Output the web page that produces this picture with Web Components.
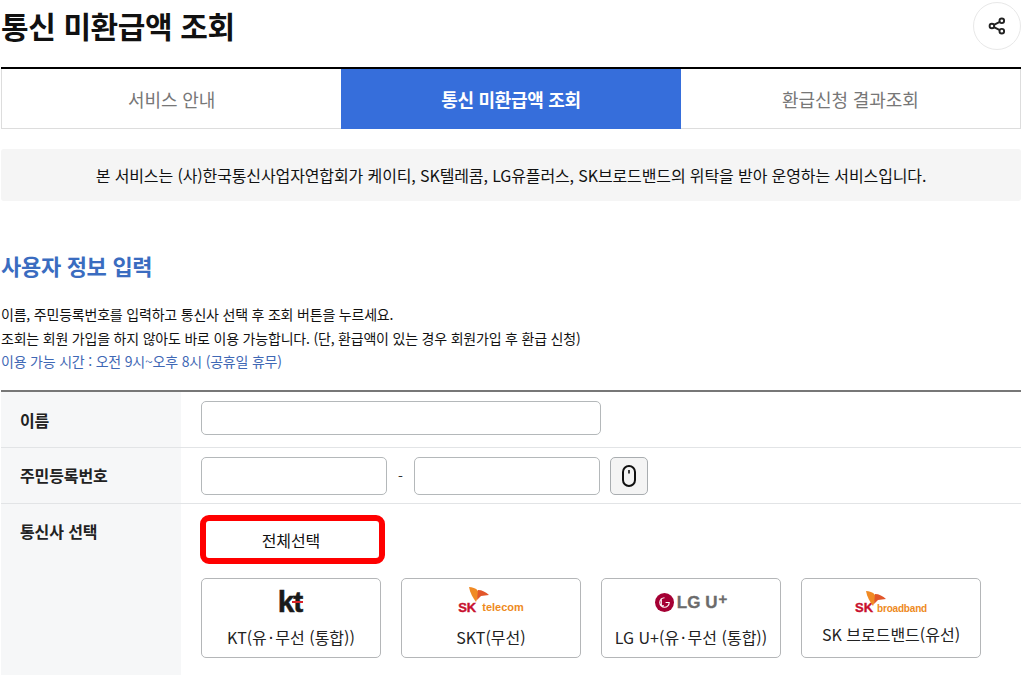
<!DOCTYPE html>
<html lang="ko">
<head>
<meta charset="utf-8">
<title>통신 미환급액 조회</title>
<style>
  html, body { margin: 0; background: #fff; }
  body {
    font-family: "Noto Sans CJK KR", "Noto Sans", sans-serif;
    color: #111;
    height: 675px;
    overflow: hidden;
  }
</style>
</head>
<body>
<refund-page></refund-page>

<script>
// Page header with title and share button
class PageHeader extends HTMLElement {
  constructor() {
    super();
    this.attachShadow({ mode: 'open' }).innerHTML = `
      <style>
        :host { display: flex; justify-content: space-between; align-items: flex-start; height: 67px; padding-left: 1px; }
        h1 { margin: 0; font-size: 30px; font-weight: 700; line-height: 50px; color: #111; letter-spacing: -0.4px; }
        button {
          width: 48px; height: 48px; margin: 2px 1px 0 0; padding: 0;
          border: 1px solid #e8e8e8; border-radius: 50%; background: #fff;
          display: flex; align-items: center; justify-content: center;
        }
      </style>
      <h1><slot></slot></h1>
      <button aria-label="공유">
        <svg width="18" height="18" viewBox="0 0 18 18" fill="none" stroke="#222" stroke-width="1.9">
          <circle cx="13.8" cy="3.8" r="2.3"/><circle cx="3.9" cy="9" r="2.3"/><circle cx="13.8" cy="14.2" r="2.3"/>
          <path d="M5.9 7.9l5.9-3M5.9 10.1l5.9 3"/>
        </svg>
      </button>`;
  }
}
customElements.define('page-header', PageHeader);

// Three tabs, the "active" attribute gives the blue one
class TabItem extends HTMLElement {
  constructor() {
    super();
    this.attachShadow({ mode: 'open' }).innerHTML = `
      <style>
        :host {
          display: flex; flex: 1; align-items: center; justify-content: center;
          font-size: 18px; color: #777; letter-spacing: -0.1px;
          border-bottom: 1px solid #ddd;
        }
        :host(:first-child) { border-left: 1px solid #ddd; }
        :host(:last-child) { border-right: 1px solid #ddd; }
        :host([active]) { background: #366edb; color: #fff; font-weight: 700; border-bottom-color: #366edb; letter-spacing: -0.3px; }
      </style>
      <slot></slot>`;
  }
}
customElements.define('tab-item', TabItem);

class TabBar extends HTMLElement {
  constructor() {
    super();
    this.attachShadow({ mode: 'open' }).innerHTML = `
      <style>
        :host { display: flex; height: 60px; margin: 0 1px; border-top: 2px solid #000; }
      </style>
      <slot></slot>`;
  }
}
customElements.define('tab-bar', TabBar);

class NoticeBox extends HTMLElement {
  constructor() {
    super();
    this.attachShadow({ mode: 'open' }).innerHTML = `
      <style>
        :host {
          display: flex; align-items: center; justify-content: center;
          height: 52px; margin: 20px 1px 0; background: #f5f5f5; border-radius: 3px;
          font-size: 16px; letter-spacing: -0.12px; color: #111;
        }
      </style>
      <slot></slot>`;
  }
}
customElements.define('notice-box', NoticeBox);

class InfoIntro extends HTMLElement {
  constructor() {
    super();
    this.attachShadow({ mode: 'open' }).innerHTML = `
      <style>
        :host { display: block; padding: 46px 1px 0; height: 189px; box-sizing: border-box; font-size: 14px; letter-spacing: -0.2px; }
        h2 { margin: 0 0 20px; font-size: 22px; line-height: 36px; font-weight: 700; color: #3a6cc0; letter-spacing: -0.3px; }
        p { margin: 0; line-height: 23.5px; color: #111; }
        .time { color: #3f68b5; }
      </style>
      <h2>사용자 정보 입력</h2>
      <p>이름, 주민등록번호를 입력하고 통신사 선택 후 조회 버튼을 누르세요.</p>
      <p>조회는 회원 가입을 하지 않아도 바로 이용 가능합니다. (단, 환급액이 있는 경우 회원가입 후 환급 신청)</p>
      <p class="time">이용 가능 시간 : 오전 9시~오후 8시 (공휴일 휴무)</p>`;
  }
}
customElements.define('info-intro', InfoIntro);

// One label + field row of the form table
class FormRow extends HTMLElement {
  constructor() {
    super();
    this.attachShadow({ mode: 'open' }).innerHTML = `
      <style>
        :host { display: grid; grid-template-columns: 180px 1fr; border-bottom: 1px solid #e2e4e6; }
        :host([last]) { border-bottom: 0; }
        .label {
          background: #f6f7f8; padding: 0 0 var(--label-pb, 0) 19px;
          display: flex; align-items: center;
          font-size: 16px; font-weight: 700; color: #222; letter-spacing: -0.1px;
        }
        :host([top]) .label { align-items: flex-start; padding-top: 15px; }
        .field { padding: var(--field-pad, 0 20px); display: flex; align-items: center; }
      </style>
      <div class="label"><slot name="label"></slot></div>
      <div class="field"><slot></slot></div>`;
  }
}
customElements.define('form-row', FormRow);

class CarrierCard extends HTMLElement {
  constructor() {
    super();
    this.attachShadow({ mode: 'open' }).innerHTML = `
      <style>
        :host {
          display: flex; flex-direction: column; align-items: center;
          width: 180px; height: 80px; box-sizing: border-box;
          border: 1px solid #b4b6b8; border-radius: 5px; background: #fff;
          font-size: 16px; color: #222;
        }
        .logo { height: var(--logo-h, 46px); display: flex; align-items: center; justify-content: center; }
      </style>
      <div class="logo"><slot name="logo"></slot></div>
      <slot></slot>`;
  }
}
customElements.define('carrier-card', CarrierCard);

// Top-level page, puts everything together
class RefundPage extends HTMLElement {
  constructor() {
    super();
    this.attachShadow({ mode: 'open' }).innerHTML = `
      <style>
        :host { display: block; width: 1022px; }
        .table { margin: 0 1px; border-top: 2px solid #777; }
        input {
          box-sizing: border-box; height: 34px; padding: 0 8px; margin: 0; background: #fff;
          border: 1px solid #b4b8ba; border-radius: 5px; font: inherit;
        }
        .name { width: 400px; }
        .ssn { display: flex; align-items: center; }
        .ssn input { width: 186px; height: 38px; }
        .dash { width: 27px; text-align: center; font-size: 14px; color: #333; }
        .kbd {
          width: 38px; height: 38px; margin-left: 10px; padding: 0;
          border: 1px solid #a9adb0; border-radius: 5px; background: #f4f4f4;
          display: flex; align-items: center; justify-content: center;
        }
        .all { display: flex; flex-direction: column; align-items: flex-start; }
        .select-all {
          box-sizing: border-box; width: 185px; height: 49px; margin-left: -1px;
          border: 6px solid #f00; border-radius: 9px; background: #fff;
          font: inherit; font-size: 16px; letter-spacing: -0.1px; color: #111; padding: 0 3px 0 0;
        }
        .cards { display: flex; gap: 20px; margin-top: 14px; }
        .dot { margin: 0 2px; }
        .kt { font: 700 30px/20px "Liberation Sans", sans-serif; letter-spacing: -1px; color: #1a1a1a; position: relative; margin-right: 2px; -webkit-text-stroke: .5px #1a1a1a; }
        .kt i { position: absolute; left: 14px; right: -1px; top: 9px; height: 2px; background: #d8232a; }
        .sk { display: flex; align-items: flex-end; gap: 6px; position: relative; padding-top: 10px; }
        .sk b { font: 700 13px/1 "Liberation Sans", sans-serif; color: #c8102e; -webkit-text-stroke: .4px #c8102e; }
        .sk span { font: 700 11px/1.1 "Liberation Sans", sans-serif; color: #ee8a1d; }
        .sk.bb { gap: 4px; margin-top: 3px; }
        .sk.bb span { font-size: 10px; letter-spacing: -0.2px; }
        .sk svg { position: absolute; }
        .lg { display: flex; align-items: center; gap: 3px; font: 700 17px/1 "Liberation Sans", sans-serif; color: #6b6b6b; -webkit-text-stroke: .3px #6b6b6b; }
        .lg sup { font-size: 15px; line-height: 0; position: relative; top: -3px; margin-left: -2px; }
      </style>

      <page-header>통신 미환급액 조회</page-header>
      <tab-bar>
        <tab-item>서비스 안내</tab-item>
        <tab-item active>통신 미환급액 조회</tab-item>
        <tab-item>환급신청 결과조회</tab-item>
      </tab-bar>
      <notice-box>본 서비스는 (사)한국통신사업자연합회가 케이티, SK텔레콤, LG유플러스, SK브로드밴드의 위탁을 받아 운영하는 서비스입니다.</notice-box>
      <info-intro></info-intro>

      <div class="table">
        <form-row style="height:55px;--field-pad:0 20px 3px">
          <span slot="label">이름</span>
          <input class="name" type="text" aria-label="이름">
        </form-row>
        <form-row style="height:55px;--label-pb:2px">
          <span slot="label">주민등록번호</span>
          <div class="ssn">
            <input type="text" aria-label="주민등록번호 앞자리">
            <span class="dash">-</span>
            <input type="text" aria-label="주민등록번호 뒷자리">
            <button class="kbd" aria-label="마우스 입력">
              <svg width="14" height="22" viewBox="0 0 14 22" fill="none" stroke="#111" stroke-width="2">
                <rect x="1" y="1" width="12" height="20" rx="6"/><path d="M7 5v3.5" stroke-width="1.6"/>
              </svg>
            </button>
          </div>
        </form-row>
        <form-row top last style="--field-pad:11px 20px 30px">
          <span slot="label">통신사 선택</span>
          <div class="all">
            <button class="select-all">전체선택</button>
            <div class="cards">
              <carrier-card>
                <span slot="logo" class="kt">kt<i></i></span>
                <span>KT(유<span class="dot">·</span>무선 (통합))</span>
              </carrier-card>
              <carrier-card>
                <span slot="logo" class="sk">
                  <svg style="left:11px;top:-4px" width="20" height="15" viewBox="0 0 20 15"><path d="M0 0c3 0 7 1 9 4l1 3-3 8C4 11 1 6 0 0z" fill="#f08a24"/><path d="M9 3c4 0 8 2 11 5l-8 1-4 4z" fill="#e2562a"/></svg>
                  <b>SK</b><span>telecom</span>
                </span>
                SKT(무선)
              </carrier-card>
              <carrier-card>
                <span slot="logo" class="lg">
                  <svg width="19" height="19" viewBox="0 0 18 18"><circle cx="9" cy="9" r="9" fill="#a50034"/><path d="M9 4.5A4.5 4.5 0 1 0 13.5 9H10M6 5v7h2.5" fill="none" stroke="#fff" stroke-width="1"/></svg>
                  LG U<sup>+</sup>
                </span>
                <span>LG U+(유<span class="dot">·</span>무선 (통합))</span>
              </carrier-card>
              <carrier-card style="--logo-h:43px">
                <span slot="logo" class="sk bb">
                  <svg style="left:11px;top:0" width="20" height="15" viewBox="0 0 20 15"><path d="M0 0c3 0 7 1 9 4l1 3-3 8C4 11 1 6 0 0z" fill="#f08a24"/><path d="M9 3c4 0 8 2 11 5l-8 1-4 4z" fill="#e2562a"/></svg>
                  <b>SK</b><span>broadband</span>
                </span>
                SK 브로드밴드(유선)
              </carrier-card>
            </div>
          </div>
        </form-row>
      </div>`;
  }
}
customElements.define('refund-page', RefundPage);
</script>
</body>
</html>
